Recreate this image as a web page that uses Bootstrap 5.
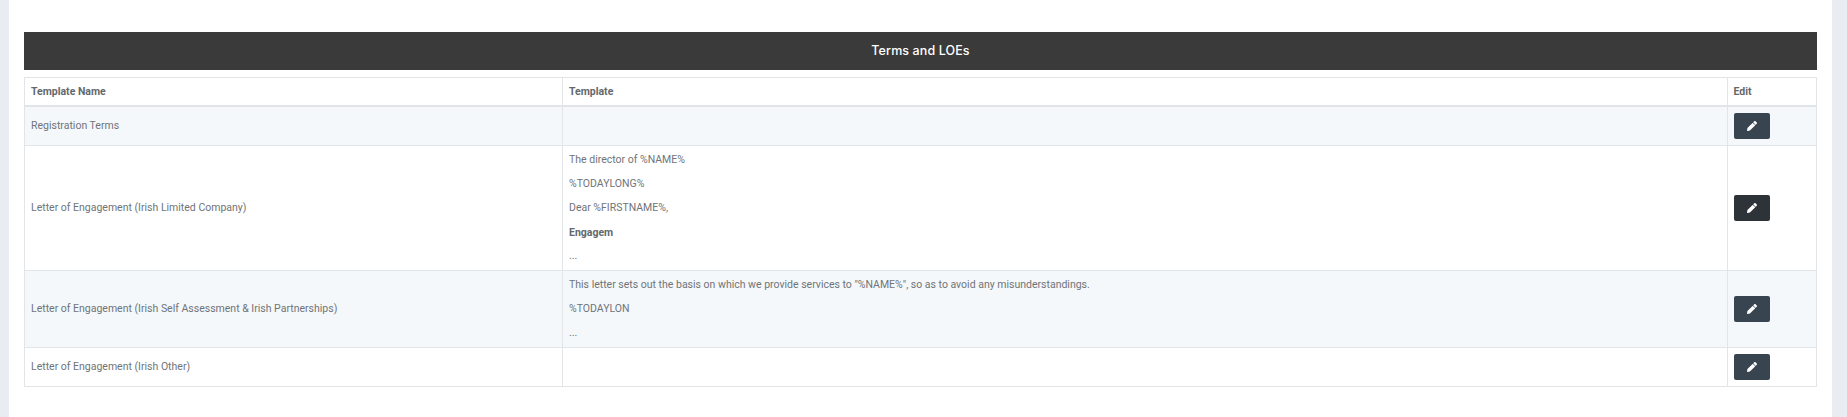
<!DOCTYPE html>
<html lang="en">
<head>
<meta charset="utf-8">
<title>Terms and LOEs</title>
<link href="https://cdn.jsdelivr.net/npm/bootstrap@5.3.0/dist/css/bootstrap.min.css" rel="stylesheet">
<style>
html, body { height: 100%; }
body { background: #e9edf1; font-family: Roboto, "Liberation Sans", sans-serif; font-size: 10.5px; color: #707478; overflow: hidden; }
.page-shell { background: #fff; margin-left: 9px; margin-right: 15px; height: 417px; padding: 32px 15px 0; }
.title-bar { background: #3a3a3a; color: #fff; height: 38px; font-family: Inter, "Noto Sans", sans-serif; font-size: 12.5px; font-weight: 500; letter-spacing: .1px; margin-bottom: 7px; }
.terms-table { table-layout: fixed; font-size: 10.5px; line-height: 16px; margin: 0; --bs-table-color: #707478; --bs-table-bg: #fff; --bs-table-striped-bg: #f4f8fb; --bs-table-striped-color: #707478; --bs-table-border-color: #e2e5e8; border-color: #e2e5e8; }
.terms-table > :not(caption) > * > * { padding: 6px; vertical-align: middle; }
.terms-table > thead > tr > th { font-weight: 700; color: #63686d; padding: 6px 6px 5px; border-bottom: 2px solid #e2e5e8; }
.terms-table > tbody { border-top: 0 !important; }
.terms-table p { margin: 0 0 8px; }
.terms-table p:last-child { margin-bottom: 0; }
.terms-table p.body-strong { font-weight: 700; color: #63686d; padding-top: 1px; margin-bottom: 7px; }
.col-name { width: 538px; }
.col-edit { width: 89.5px; }
.edit-btn { width: 36px; height: 26px; padding: 0; border: 0; border-radius: 2px; background: #38444f; display: flex; align-items: center; justify-content: center; }
.edit-btn:hover { background: #38444f; }
.edit-btn.is-hover, .edit-btn.is-hover:hover { background: #2e3239; }
.edit-btn svg { width: 10px; height: 10px; fill: #fff; display: block; }
</style>
</head>
<body>
<div class="page-shell">
  <div class="title-bar d-flex align-items-center justify-content-center">Terms and LOEs</div>
  <table class="table table-bordered table-striped terms-table">
    <colgroup><col class="col-name"><col><col class="col-edit"></colgroup>
    <thead>
      <tr><th>Template Name</th><th>Template</th><th>Edit</th></tr>
    </thead>
    <tbody>
      <tr>
        <td>Registration Terms</td>
        <td></td>
        <td><button type="button" class="btn edit-btn" aria-label="Edit"><svg viewBox="0 0 512 512"><path d="M497.9 142.1l-46.1 46.1c-4.7 4.7-12.3 4.7-17 0l-111-111c-4.7-4.7-4.7-12.3 0-17l46.1-46.1c18.7-18.7 49.1-18.7 67.9 0l60.1 60.1c18.8 18.7 18.8 49.1 0 67.9zM284.2 99.8L21.6 362.4.4 483.9c-2.9 16.4 11.4 30.6 27.8 27.8l121.5-21.3 262.6-262.6c4.7-4.7 4.7-12.3 0-17l-111-111c-4.8-4.7-12.4-4.7-17.1 0z"/></svg></button></td>
      </tr>
      <tr>
        <td>Letter of Engagement (Irish Limited Company)</td>
        <td>
          <p>The director of %NAME%</p>
          <p>%TODAYLONG%</p>
          <p>Dear %FIRSTNAME%,</p>
          <p class="body-strong">Engagem</p>
          <p>...</p>
        </td>
        <td><button type="button" class="btn edit-btn is-hover" aria-label="Edit"><svg viewBox="0 0 512 512"><path d="M497.9 142.1l-46.1 46.1c-4.7 4.7-12.3 4.7-17 0l-111-111c-4.7-4.7-4.7-12.3 0-17l46.1-46.1c18.7-18.7 49.1-18.7 67.9 0l60.1 60.1c18.8 18.7 18.8 49.1 0 67.9zM284.2 99.8L21.6 362.4.4 483.9c-2.9 16.4 11.4 30.6 27.8 27.8l121.5-21.3 262.6-262.6c4.7-4.7 4.7-12.3 0-17l-111-111c-4.8-4.7-12.4-4.7-17.1 0z"/></svg></button></td>
      </tr>
      <tr>
        <td>Letter of Engagement (Irish Self Assessment &amp; Irish Partnerships)</td>
        <td>
          <p>This letter sets out the basis on which we provide services to "%NAME%", so as to avoid any misunderstandings.</p>
          <p>%TODAYLON</p>
          <p>...</p>
        </td>
        <td><button type="button" class="btn edit-btn" aria-label="Edit"><svg viewBox="0 0 512 512"><path d="M497.9 142.1l-46.1 46.1c-4.7 4.7-12.3 4.7-17 0l-111-111c-4.7-4.7-4.7-12.3 0-17l46.1-46.1c18.7-18.7 49.1-18.7 67.9 0l60.1 60.1c18.8 18.7 18.8 49.1 0 67.9zM284.2 99.8L21.6 362.4.4 483.9c-2.9 16.4 11.4 30.6 27.8 27.8l121.5-21.3 262.6-262.6c4.7-4.7 4.7-12.3 0-17l-111-111c-4.8-4.7-12.4-4.7-17.1 0z"/></svg></button></td>
      </tr>
      <tr>
        <td>Letter of Engagement (Irish Other)</td>
        <td></td>
        <td><button type="button" class="btn edit-btn" aria-label="Edit"><svg viewBox="0 0 512 512"><path d="M497.9 142.1l-46.1 46.1c-4.7 4.7-12.3 4.7-17 0l-111-111c-4.7-4.7-4.7-12.3 0-17l46.1-46.1c18.7-18.7 49.1-18.7 67.9 0l60.1 60.1c18.8 18.7 18.8 49.1 0 67.9zM284.2 99.8L21.6 362.4.4 483.9c-2.9 16.4 11.4 30.6 27.8 27.8l121.5-21.3 262.6-262.6c4.7-4.7 4.7-12.3 0-17l-111-111c-4.8-4.7-12.4-4.7-17.1 0z"/></svg></button></td>
      </tr>
    </tbody>
  </table>
</div>
<script src="https://cdn.jsdelivr.net/npm/bootstrap@5.3.0/dist/js/bootstrap.bundle.min.js"></script>
</body>
</html>
